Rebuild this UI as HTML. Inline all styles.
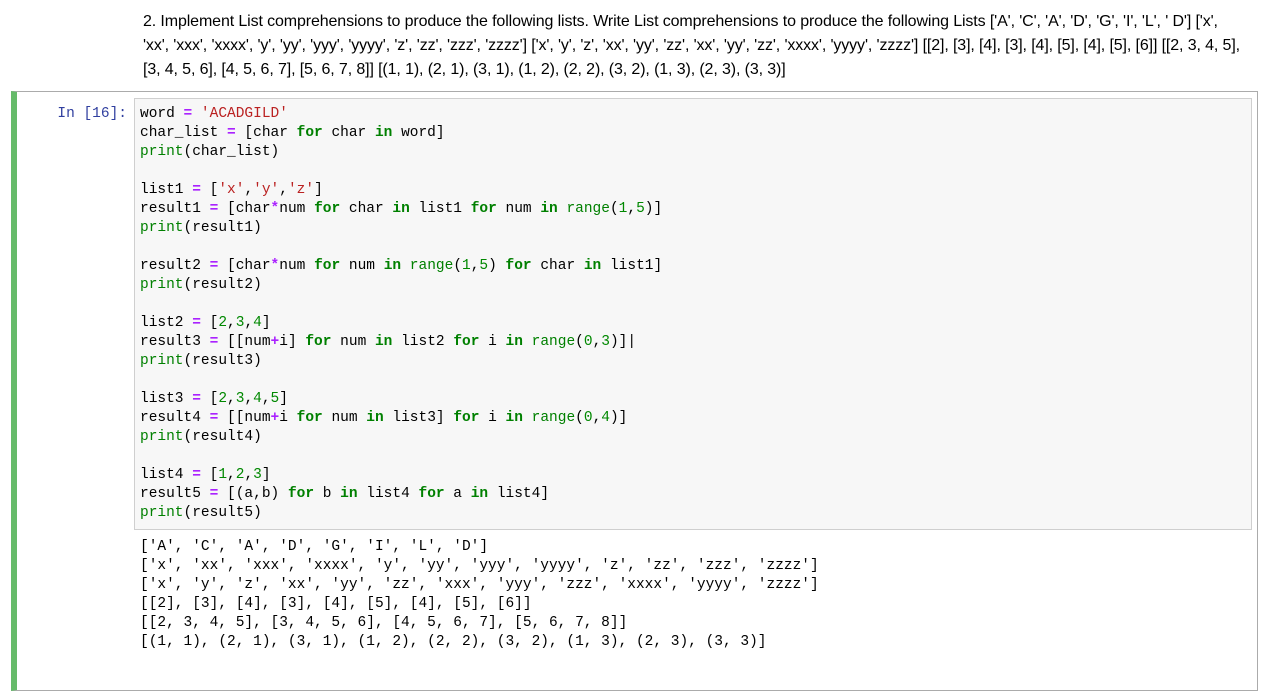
<!DOCTYPE html>
<html><head><style>
body{margin:0;background:#fff;width:1279px;height:664px;overflow:hidden;position:relative;font-family:"Liberation Sans",sans-serif}
.md{position:absolute;left:143px;top:10px;white-space:nowrap;font-size:16px;letter-spacing:-0.12px;line-height:24px;color:#000}
.cell{position:absolute;left:11px;top:91px;width:1247px;height:600px;border:1px solid #ababab;border-left:6px solid #66bb6a;box-sizing:border-box}
.prompt{position:absolute;left:20px;top:105px;width:107px;text-align:right;font:14.5px/19px "Liberation Mono",monospace;color:#303f9f}
.inp{position:absolute;left:134px;top:98px;width:1118px;height:432px;background:#f7f7f7;border:1px solid #cfcfcf;box-sizing:border-box}
pre{margin:0;font:14.5px/19px "Liberation Mono",monospace;color:#000;position:absolute;left:140px}
.k{color:#008000;font-weight:bold}.o{color:#aa22ff;font-weight:bold}.s{color:#ba2121}.n{color:#080}.b{color:#008000}
</style></head><body>
<div class="md">2. Implement List comprehensions to produce the following lists. Write List comprehensions to produce the following Lists ['A', 'C', 'A', 'D', 'G', 'I', 'L', ' D'] ['x',<br>'xx', 'xxx', 'xxxx', 'y', 'yy', 'yyy', 'yyyy', 'z', 'zz', 'zzz', 'zzzz'] ['x', 'y', 'z', 'xx', 'yy', 'zz', 'xx', 'yy', 'zz', 'xxxx', 'yyyy', 'zzzz'] [[2], [3], [4], [3], [4], [5], [4], [5], [6]] [[2, 3, 4, 5],<br>[3, 4, 5, 6], [4, 5, 6, 7], [5, 6, 7, 8]] [(1, 1), (2, 1), (3, 1), (1, 2), (2, 2), (3, 2), (1, 3), (2, 3), (3, 3)]</div>
<div class="cell"></div>
<div class="prompt">In [16]:</div>
<div class="inp"></div>
<pre style="top:105px">word <span class="o">=</span> <span class="s">'ACADGILD'</span>
char_list <span class="o">=</span> [char <span class="k">for</span> char <span class="k">in</span> word]
<span class="b">print</span>(char_list)

list1 <span class="o">=</span> [<span class="s">'x'</span>,<span class="s">'y'</span>,<span class="s">'z'</span>]
result1 <span class="o">=</span> [char<span class="o">*</span>num <span class="k">for</span> char <span class="k">in</span> list1 <span class="k">for</span> num <span class="k">in</span> <span class="b">range</span>(<span class="n">1</span>,<span class="n">5</span>)]
<span class="b">print</span>(result1)

result2 <span class="o">=</span> [char<span class="o">*</span>num <span class="k">for</span> num <span class="k">in</span> <span class="b">range</span>(<span class="n">1</span>,<span class="n">5</span>) <span class="k">for</span> char <span class="k">in</span> list1]
<span class="b">print</span>(result2)

list2 <span class="o">=</span> [<span class="n">2</span>,<span class="n">3</span>,<span class="n">4</span>]
result3 <span class="o">=</span> [[num<span class="o">+</span>i] <span class="k">for</span> num <span class="k">in</span> list2 <span class="k">for</span> i <span class="k">in</span> <span class="b">range</span>(<span class="n">0</span>,<span class="n">3</span>)]|
<span class="b">print</span>(result3)

list3 <span class="o">=</span> [<span class="n">2</span>,<span class="n">3</span>,<span class="n">4</span>,<span class="n">5</span>]
result4 <span class="o">=</span> [[num<span class="o">+</span>i <span class="k">for</span> num <span class="k">in</span> list3] <span class="k">for</span> i <span class="k">in</span> <span class="b">range</span>(<span class="n">0</span>,<span class="n">4</span>)]
<span class="b">print</span>(result4)

list4 <span class="o">=</span> [<span class="n">1</span>,<span class="n">2</span>,<span class="n">3</span>]
result5 <span class="o">=</span> [(a,b) <span class="k">for</span> b <span class="k">in</span> list4 <span class="k">for</span> a <span class="k">in</span> list4]
<span class="b">print</span>(result5)</pre>
<pre style="top:538px">['A', 'C', 'A', 'D', 'G', 'I', 'L', 'D']
['x', 'xx', 'xxx', 'xxxx', 'y', 'yy', 'yyy', 'yyyy', 'z', 'zz', 'zzz', 'zzzz']
['x', 'y', 'z', 'xx', 'yy', 'zz', 'xxx', 'yyy', 'zzz', 'xxxx', 'yyyy', 'zzzz']
[[2], [3], [4], [3], [4], [5], [4], [5], [6]]
[[2, 3, 4, 5], [3, 4, 5, 6], [4, 5, 6, 7], [5, 6, 7, 8]]
[(1, 1), (2, 1), (3, 1), (1, 2), (2, 2), (3, 2), (1, 3), (2, 3), (3, 3)]</pre>
</body></html>
